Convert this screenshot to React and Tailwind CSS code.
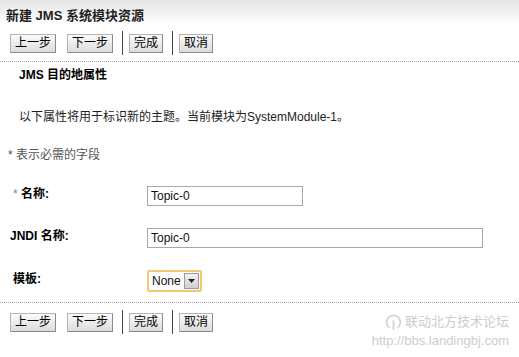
import React from 'react';

const font = { fontFamily: '"Liberation Sans", "Noto Sans CJK SC", sans-serif' };

function Btn({ children }) {
    return (
        <button className="h-[19px] px-[4px] text-[12px] leading-[15px] text-black bg-gradient-to-b from-[#fbfbfb] to-[#dcdcdc] border border-[#b4b4b4] border-b-[#8a8a8a] border-r-[#8a8a8a]">
            {children}
        </button>
    );
}

function ButtonBar() {
    return (
        <div className="flex items-center h-[26px] pl-[10px]">
            <Btn>上一步</Btn>
            <div className="w-[11px]" />
            <Btn>下一步</Btn>
            <div className="w-px h-[24px] bg-[#444] ml-[9px] mr-[6px]" />
            <Btn>完成</Btn>
            <div className="w-px h-[24px] bg-[#444] ml-[9px] mr-[6px]" />
            <Btn>取消</Btn>
        </div>
    );
}

function Dotted() {
    return <div className="border-t border-dotted border-[#a8a8a8]" />;
}

export default function App() {
    return (
        <div className="w-[519px] h-[357px] bg-white relative overflow-hidden" style={font}>
            <div className="h-[24px] bg-gradient-to-b from-[#e4e4e4] to-white pl-[6px] pt-[3px]">
                <span className="text-[13px] font-bold text-[#222]">新建 JMS 系统模块资源</span>
            </div>
            <div className="pt-[6px] pb-[5px]">
                <ButtonBar />
            </div>
            <Dotted />
            <div className="pl-[19px] pt-[4px] text-[12px] font-bold text-black">JMS 目的地属性</div>
            <div className="pl-[19px] pt-[24px] text-[12px] text-[#222]">以下属性将用于标识新的主题。当前模块为SystemModule-1。</div>
            <div className="pl-[8px] pt-[20px] text-[12px] text-[#555]">* 表示必需的字段</div>
            <div className="pt-[22px] flex flex-col gap-[22px]">
                <div className="flex items-center">
                    <div className="w-[147px] pl-[13px] text-[12px] font-bold text-black -mt-[4px]">
                        <span className="text-[#888] font-normal">* </span>名称:
                    </div>
                    <div className="w-[156px] h-[20px] border border-[#a8a8a8] px-[3px] text-[12px] leading-[18px] text-[#111]">Topic-0</div>
                </div>
                <div className="flex items-center">
                    <div className="w-[147px] pl-[10px] text-[12px] font-bold text-black -mt-[4px]">JNDI 名称:</div>
                    <div className="w-[336px] h-[20px] border border-[#a8a8a8] px-[3px] text-[12px] leading-[18px] text-[#111]">Topic-0</div>
                </div>
                <div className="flex items-center">
                    <div className="w-[147px] pl-[13px] text-[12px] font-bold text-black -mt-[4px]">模板:</div>
                    <div className="h-[22px] border-2 border-[#f0c870] rounded-[2px] flex items-center bg-white">
                        <span className="px-[3px] text-[12px] text-[#111]">None</span>
                        <div className="w-[15px] h-[16px] mr-[1px] bg-gradient-to-b from-[#f2f2f2] to-[#cfcfcf] border border-[#999] flex items-center justify-center">
                            <svg width="7" height="4" viewBox="0 0 7 4"><path d="M0 0h7L3.5 4z" fill="#222" /></svg>
                        </div>
                    </div>
                </div>
            </div>
            <div className="pt-[10px]">
                <Dotted />
            </div>
            <div className="pt-[6px]">
                <ButtonBar />
            </div>
            <div className="absolute right-[10px] bottom-[6px] flex flex-col items-end text-[#cdcdcd]">
                <div className="flex items-center gap-[3px] text-[13px] leading-[18px]">
                    <svg width="17" height="17" viewBox="0 0 16 16" fill="none" stroke="#d2d2d2" strokeWidth="1.6">
                        <path d="M4 13A6.5 6.5 0 1 1 12 13" />
                        <path d="M8 6v9" />
                    </svg>
                    <span>联动北方技术论坛</span>
                </div>
                <div className="text-[13px] leading-[20px]">http://bbs.landingbj.com</div>
            </div>
        </div>
    );
}
